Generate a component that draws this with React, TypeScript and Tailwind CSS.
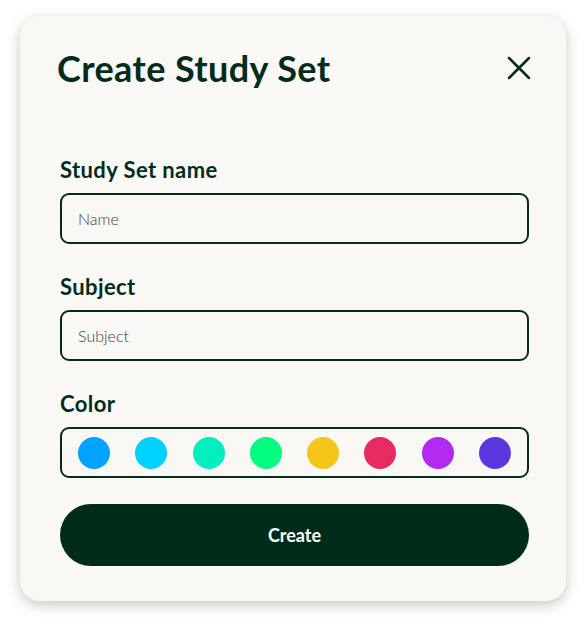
import { X } from "lucide-react";

const COLORS = ["#00a3ff", "#00d2ff", "#00efc1", "#00fd7f", "#f6c51a", "#e92962", "#b229f0", "#5b37df"];

function Field({ label, placeholder }: { label: string; placeholder: string }) {
  return (
    <div className="flex flex-col">
      <label className="text-[22px] leading-[28px] font-bold tracking-[0.4px] text-[#032d1a]">{label}</label>
      <input
        placeholder={placeholder}
        className="mt-[9px] h-[51px] rounded-[9px] border-2 border-[#032d1a] bg-transparent px-4 text-[16px] font-light text-[#032d1a] outline-none placeholder:text-[#3a3a3a]"
      />
    </div>
  );
}

export default function App() {
  return (
    <div className="min-h-[625px] bg-white pl-5 pt-4 font-['Lato',sans-serif]">
      <div className="w-[546px] h-[585px] rounded-[20px] bg-[#f9f8f5] pl-10 pr-[37px] pt-[24px] shadow-[0_4px_14px_rgba(0,0,0,0.22)]">
        <div className="flex items-center justify-between">
          <h1 className="-ml-[3px] text-[36px] leading-[56px] font-bold text-[#032d1a] tracking-[0.4px]">Create Study Set</h1>
          <button className="-mr-[10px] text-[#032d1a]">
            <X size={40} strokeWidth={1.5} />
          </button>
        </div>

        <div className="mt-[60px] flex flex-col gap-[29px]">
          <Field label="Study Set name" placeholder="Name" />
          <Field label="Subject" placeholder="Subject" />
          <div className="flex flex-col">
            <span className="text-[22px] leading-[28px] font-bold tracking-[0.4px] text-[#032d1a]">Color</span>
            <div className="mt-[9px] flex h-[51px] items-center justify-between rounded-[9px] border-2 border-[#032d1a] pl-4 pr-4">
              {COLORS.map((c) => (
                <span key={c} className="h-8 w-8 rounded-full" style={{ backgroundColor: c }} />
              ))}
            </div>
          </div>
        </div>

        <button className="mt-[26px] h-[62px] w-full rounded-full bg-[#022c1a] text-[18px] font-bold text-white">
          Create
        </button>
      </div>
    </div>
  );
}
